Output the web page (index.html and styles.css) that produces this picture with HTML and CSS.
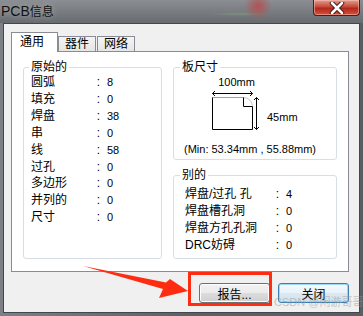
FILE: index.html
```html
<!DOCTYPE html>
<html>
<head>
<link rel="stylesheet" href="styles.css">
</head>
<body>

<div class="window">
  <div class="titlebar">
    <div class="title">PCB<span class="title-cjk">信息</span></div>
    <div class="close">
      <svg width="16" height="12" viewBox="0 0 16 12">
        <path d="M3 1 L13 11 M13 1 L3 11" stroke="#3a1010" stroke-width="4.5" stroke-linecap="round"/>
        <path d="M3 1 L13 11 M13 1 L3 11" stroke="#fff" stroke-width="2.6" stroke-linecap="round"/>
      </svg>
    </div>
  </div>

  <div class="client">
    <div class="tabs">
      <div class="tab active">通用</div>
      <div class="tab">器件</div>
      <div class="tab">网络</div>
    </div>

    <div class="panel">
      <fieldset class="group group-left">
        <legend>原始的</legend>
        <div class="stats">
          <span>圆弧</span><span class="colon">:</span><span class="val">8</span>
          <span>填充</span><span class="colon">:</span><span class="val">0</span>
          <span>焊盘</span><span class="colon">:</span><span class="val">38</span>
          <span>串</span><span class="colon">:</span><span class="val">0</span>
          <span>线</span><span class="colon">:</span><span class="val">58</span>
          <span>过孔</span><span class="colon">:</span><span class="val">0</span>
          <span>多边形</span><span class="colon">:</span><span class="val">0</span>
          <span>并列的</span><span class="colon">:</span><span class="val">0</span>
          <span>尺寸</span><span class="colon">:</span><span class="val">0</span>
        </div>
      </fieldset>

      <div class="col">
        <fieldset class="group group-board">
          <legend>板尺寸</legend>
          <div class="dim">
            <div class="dim-fig">
              <span class="dim-w">100mm</span>
              <svg width="50" height="42" viewBox="0 0 50 42">
                <path d="M2.5 4.5 H42.5 M5 2 L2.5 4.5 L5 7 M40 2 L42.5 4.5 L40 7" stroke="#000" fill="none"/>
                <path d="M2.5 8.5 H33.5" stroke="#a0a0a0" fill="none"/>
                <path d="M33.5 8.5 Q41 9 42.5 16.5" stroke="#c8c8c8" fill="none"/>
                <path d="M2.5 8.5 V40.5 H42.5 V17.5 H33.5 V8.5" stroke="#000" fill="none"/>
                <path d="M46.5 8.5 V40.5 M44 11 L46.5 8.5 L49 11 M44 38 L46.5 40.5 L49 38" stroke="#000" fill="none"/>
              </svg>
            </div>
            <span class="dim-h">45mm</span>
          </div>
          <div class="dim-min">(Min: 53.34mm , 55.88mm)</div>
        </fieldset>

        <fieldset class="group group-other">
          <legend>别的</legend>
          <div class="stats stats-other">
            <span>焊盘/过孔 孔</span><span class="colon">:</span><span class="val">4</span>
            <span>焊盘槽孔洞</span><span class="colon">:</span><span class="val">0</span>
            <span>焊盘方孔孔洞</span><span class="colon">:</span><span class="val">0</span>
            <span>DRC妨碍</span><span class="colon">:</span><span class="val">0</span>
          </div>
        </fieldset>
      </div>
    </div>

    <div class="buttons">
      <button class="btn">报告...</button>
      <button class="btn btn-default">关闭</button>
    </div>
  </div>

  <svg class="arrow" width="363" height="316" viewBox="0 0 363 316">
    <polygon points="83,266 166,282.5 170,279 188,291 159,298 163,289" fill="#fe2d12"/>
  </svg>
  <div class="highlight"></div>
  <div class="watermark">CSDN @闲游哥哥</div>
</div>

</body>
</html>
```

FILE: styles.css
```css
body {
  margin: 0;
  font-family: "Liberation Sans", "Noto Sans CJK SC", sans-serif;
  font-size: 12px;
  color: #000;
}

.window {
  position: relative;
  width: 363px;
  height: 316px;
  display: flex;
  flex-direction: column;
  overflow: hidden;
  background: linear-gradient(90deg, #7d8185, #5e6266 50%, #5a5e62);
}

.titlebar {
  height: 23px;
  display: flex;
  justify-content: space-between;
  align-items: flex-start;
  background:
    radial-gradient(circle at 258px 6px, rgba(190, 70, 70, 0.8) 0, rgba(190, 70, 70, 0) 14px),
    radial-gradient(ellipse at 240px 14px, rgba(140, 170, 120, 0.5) 0, rgba(140, 170, 120, 0) 30px),
    linear-gradient(#8b8f93, #676b6f);
}

.title {
  padding: 3px 0 0 1px;
  font-size: 14px;
  line-height: 16px;
  color: #111;
  text-shadow: 0 0 6px rgba(255, 255, 255, 0.45);
}

.title-cjk {
  font-size: 12px;
}

.close {
  width: 45px;
  height: 15px;
  margin-right: 3px;
  border: 1px solid #3b2222;
  border-top: none;
  border-radius: 0 0 4px 4px;
  background: linear-gradient(#e0a090, #c5493a 45%, #b0281c 55%, #d6523c);
  box-shadow: inset 0 0 0 1px rgba(255, 200, 190, 0.5);
  display: flex;
  align-items: center;
  justify-content: center;
}

.client {
  flex: 1;
  margin: 0 3px 3px;
  border: 1px solid #43474b;
  background-color: #f0f0f0;
  padding: 9px 10px 9px 7px;
  display: flex;
  flex-direction: column;
}

.tabs {
  height: 19px;
  display: flex;
  align-items: flex-end;
  margin-bottom: -1px;
}

.tab {
  height: 15px;
  line-height: 15px;
  padding: 0 6px;
  border: 1px solid #898c95;
  border-bottom: none;
  background: linear-gradient(#f4f4f4, #e4e4e4);
}

.tab + .tab {
  margin-left: 1px;
}

.tab.active {
  position: relative;
  z-index: 1;
  height: 19px;
  line-height: 18px;
  padding: 0 10px 0 8px;
  background: #fff;
  width: 27px;
  margin-right: -1px;
}

.panel {
  flex: 1;
  display: flex;
  gap: 11px;
  padding: 8px 11px 12px;
  border: 1px solid #898c95;
  background-color: #fff;
}

.group {
  margin: 0;
  min-width: 0;
  border: 1px solid #d5dfe5;
  border-radius: 3px;
  padding: 0 7px;
}

.group legend {
  padding: 0 2px;
  margin-left: -2px;
  line-height: 14px;
}

.group-left {
  width: 123px;
}

.col {
  flex: 1;
  display: flex;
  flex-direction: column;
  gap: 8px;
}

.group-board {
  height: 100px;
  box-sizing: border-box;
  padding: 0 8px;
}

.group-other {
  flex: 1;
  padding: 0 8px;
}

.stats {
  display: grid;
  grid-template-columns: 63px 9px auto;
  line-height: 16.9px;
}

.stats .colon {
  text-align: center;
}

.stats .val {
  padding-left: 4px;
  font-size: 11px;
}

.stats-other {
  grid-template-columns: 88px 9px auto;
  line-height: 17px;
  padding: 3.5px 0 0 3px;
}

.dim {
  display: flex;
  margin: 1px 0 0 28px;
  font-size: 11px;
}

.dim-fig {
  width: 50px;
  display: flex;
  flex-direction: column;
  align-items: center;
}

.dim-w {
  line-height: 14px;
  padding-left: 3px;
}

.dim-fig svg {
  display: block;
}

.dim-h {
  padding: 35px 0 0 7px;
  line-height: 14px;
}

.dim-min {
  margin: 11px 0 0 2px;
  line-height: 14px;
  font-size: 11px;
  white-space: nowrap;
}

.buttons {
  display: flex;
  justify-content: flex-end;
  gap: 8px;
  margin-top: 11px;
}

.btn {
  width: 71px;
  height: 20px;
  padding: 0;
  font: inherit;
  color: #000;
  border: 1px solid #707070;
  border-radius: 3px;
  background: linear-gradient(#f2f2f2 0%, #ebebeb 50%, #dddddd 50%, #cfcfcf 100%);
  box-shadow: inset 0 0 0 1px #fcfcfc;
}

.btn-default {
  border-color: #3c7fb1;
  background: linear-gradient(#f4f9fc 0%, #eaf3f9 50%, #dbe9f3 50%, #cfe2ef 100%);
  box-shadow: inset 0 0 0 1px #9ed6f7;
}

.arrow {
  position: absolute;
  left: 0;
  top: 0;
  pointer-events: none;
}

.highlight {
  position: absolute;
  left: 188px;
  top: 272px;
  width: 78px;
  height: 28px;
  border: 3px solid #fe2d12;
}

.watermark {
  position: absolute;
  left: 274px;
  top: 296px;
  font-size: 11px;
  line-height: 13px;
  color: rgba(150, 150, 150, 0.5);
  white-space: nowrap;
}
```
